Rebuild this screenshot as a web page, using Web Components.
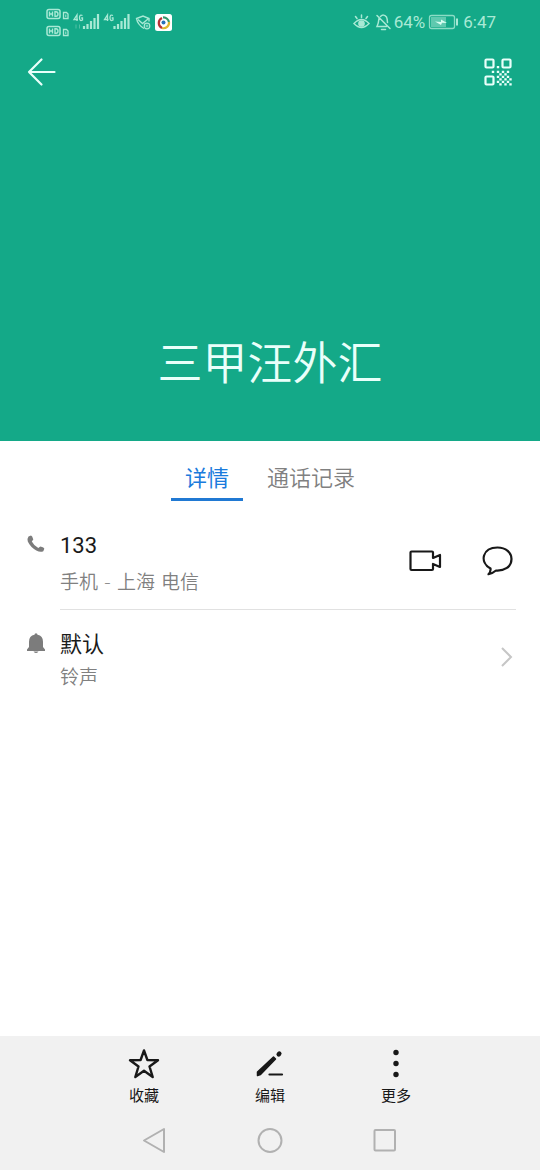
<!DOCTYPE html>
<html lang="zh-CN">
<head>
<meta charset="utf-8">
<meta name="viewport" content="width=device-width, initial-scale=1">
<title>联系人详情</title>
<style>
html, body { margin: 0; }
body { background: #fff; font-family: Roboto, "Noto Sans CJK SC", sans-serif; color: #1a1a1a; }
</style>
</head>
<body>
<contact-page></contact-page>
<script>
const define = (name, html) => customElements.define(name, class extends HTMLElement {
  constructor() {
    super();
    const t = document.createElement('template');
    t.innerHTML = html;
    this.attachShadow({ mode: 'open' }).append(t.content.cloneNode(true));
  }
});

define('status-bar', `
<style>
:host { display: flex; justify-content: space-between; align-items: center; box-sizing: border-box; height: 43px; padding: 0 44px 0 46px; color: #a9e9d5; font-size: 17px; line-height: 20px; }
div { display: flex; align-items: center; }
svg { display: block; flex: none; }
.right { gap: 3px; }
</style>
<div>
<svg width="128" height="32" viewBox="46 5 128 32" fill="none" stroke="currentColor" role="img" aria-label="信号">
  <rect x="47" y="8.500" width="13" height="9" rx="2" stroke-width="1.500"/>
  <path d="M49.500 10.500v5M52.500 10.500v5M49.500 13h3M55 10.700v4.600h1q2 0 2-2.300t-2-2.300z" stroke-width="1.400"/>
  <path d="M63.500 11.500h3l1.500 1.500v4.500h-4.500z" stroke-width="1.300"/>
  <path d="M65.800 13.500v2.500"/>
  <rect x="47" y="25.500" width="13" height="9" rx="2" stroke-width="1.500"/>
  <path d="M49.500 27.500v5M52.500 27.500v5M49.500 30h3M55 27.700v4.600h1q2 0 2-2.300t-2-2.300z" stroke-width="1.400"/>
  <path d="M63.500 28.500h3l1.500 1.500v4.500h-4.500z" stroke-width="1.300"/>
  <path d="M65.800 30.500v2.500"/>
  <g stroke-width="1.300">
    <path d="M77 20v-6l-3 4.500h4M82.500 14.500q-3-1.500-3 2.300t3 2.200v-2h-1.300"/>
    <path d="M107.500 20v-6l-3 4.500h4M113 14.500q-3-1.500-3 2.300t3 2.200v-2h-1.300"/>
  </g>
  <path d="M76 27.500v-4M79.500 23.500v4" opacity=".4"/>
  <g stroke-width="2.200">
    <path d="M84 28v-3M87.500 28v-5M91 28v-8M94.500 28v-11M98 28v-15"/>
    <path d="M114.500 28v-3M118 28v-5M121.500 28v-8M125 28v-11M128.500 28v-15"/>
  </g>
  <path d="M144 27.500q-6.500-4-7.500-10l6.500-2.500 6 2.500v3M138 18.500l4.500 4 5.500-4.500" stroke-width="1.400"/>
  <circle cx="147" cy="25" r="2.800" stroke-width="1.200"/>
  <path d="M145.500 25h3M147 23.500v3" stroke-width=".8"/>
  <rect x="155" y="13" width="17" height="17" rx="2.500" fill="#fff" stroke="none"/>
  <path d="M163 16.500a5.500 5.500 0 0 1 6 5" stroke="#32966a" stroke-width="2.200"/>
  <path d="M169 21a5.500 5.500 0 0 1-7 6" stroke="#e0b62e" stroke-width="2.200"/>
  <path d="M162 27a5.500 5.500 0 0 1 0-10" stroke="#b63336" stroke-width="2.200"/>
  <circle cx="163.500" cy="21.500" r="2" fill="#256fb8" stroke="none"/>
</svg>
</div>
<div class="right">
<svg width="38" height="20" viewBox="353 11 38 20" fill="none" stroke="currentColor" stroke-width="1.500" stroke-linecap="round" role="img" aria-label="护眼，静音">
  <path d="M354 22.500q7.500-8 15 0-7.500 8-15 0zM361.500 14v2.500M355.500 15.500l1.500 2M367.500 15.500l-1.500 2"/>
  <circle cx="361.500" cy="22.500" r="2.600" fill="currentColor"/>
  <path d="M377 14.500l13 13M379 17.500q-.5 5-2 8h9.500M380.500 15.500q3-3 6 .5 1 2 1 5.500M381.500 28.500h4"/>
</svg>
<span>64%</span>
<svg width="32" height="16" viewBox="429 13 32 16" fill="none" role="img" aria-label="正在充电">
  <rect x="430.500" y="14.500" width="25" height="13" rx="2" stroke="currentColor" stroke-width="1.300" opacity=".8"/>
  <rect x="432" y="16" width="15" height="10" fill="currentColor" opacity=".5"/>
  <path d="M457 17.500h2v7h-2z" fill="currentColor"/>
  <path d="M436 20.500l6 .5v-2.500l6 3.500-5-.3-1 2.300z" fill="#d9fff2"/>
</svg>
<span>6:47</span>
</div>`);

define('contact-hero', `
<style>
:host { display: block; background: #14a988; color: #e9fffa; }
nav { display: flex; justify-content: space-between; padding: 9px 22px; }
button { display: grid; place-items: center; width: 40px; height: 40px; padding: 0; border: 0; background: none; color: inherit; }
svg { display: block; }
h1 { margin: 0; padding: 231px 16px 43px; text-align: center; font-size: 45px; font-weight: 350; line-height: 66px; }
</style>
<status-bar></status-bar>
<nav>
<button aria-label="返回"><svg width="30" height="30" viewBox="0 0 30 30" fill="none" stroke="currentColor" stroke-width="2.200" stroke-linecap="round" stroke-linejoin="round"><path d="M14.500 2.500L2 15l12.500 12.500M2 15h25.500"/></svg></button>
<button aria-label="二维码"><svg width="28" height="28" viewBox="0 0 28 28" fill="none" stroke="currentColor" stroke-width="2.200"><rect x="1.500" y="1.500" width="8" height="8" rx="1"/><rect x="18.500" y="1.500" width="8" height="8" rx="1"/><rect x="1.500" y="18.500" width="8" height="8" rx="1"/><path d="M12.800 9.200h2.400M7.800 13.900h2.400M12.800 13.900h2.400M17.800 13.900h2.400M22.800 13.900h2.400M15.300 16.400h2.400M20.300 16.400h2.400M12.800 18.900h2.400M17.800 18.900h2.400M22.800 18.900h2.400M15.300 21.400h2.400M20.300 21.400h2.400M25.300 21.400h2.400M12.800 23.900h2.400M17.800 23.900h2.400M22.800 23.900h2.400M15.300 26.400h2.400M20.300 26.400h2.400M25.300 26.400h2.400"/></svg></button>
</nav>
<h1><slot></slot></h1>`);

define('contact-tabs', `
<style>
:host { display: flex; justify-content: center; gap: 10px; padding: 15px 0 20px; }
button { box-sizing: border-box; height: 45px; padding: 3px 14px 0; border: 0; border-bottom: 3px solid transparent; background: none; color: #808080; font: 350 22px/36px Roboto, "Noto Sans CJK SC", sans-serif; }
[aria-selected=true] { color: #1a7bdc; border-color: #2079d3; font-weight: 400; }
</style>
<button role="tab" aria-selected="true">详情</button>
<button role="tab" aria-selected="false">通话记录</button>`);

define('detail-row', `
<style>
:host { --top: 18px; --gap: 0px; display: grid; grid-template-columns: 36px 1fr; padding: 0 24px; }
:host([divided]) { --top: 8px; --gap: 4px; }
.icon { padding: calc(var(--top) + 5px) 0 0 2px; }
.body { display: flex; justify-content: space-between; align-items: center; padding: var(--top) 0 12px; }
:host([divided]) .body { border-bottom: 1px solid #e1e1e1; }
.text { display: flex; flex-direction: column; gap: var(--gap); }
.title { font-size: 22px; font-weight: 400; line-height: 34px; }
.sub { color: #808080; font-family: "DejaVu Sans", "Noto Sans CJK SC", sans-serif; font-size: 19px; font-weight: 350; line-height: 30px; }
.actions { padding-bottom: 4px; }
</style>
<div class="icon"><slot name="icon"></slot></div>
<div class="body">
<div class="text"><div class="title"><slot name="title"></slot></div><div class="sub"><slot name="sub"></slot></div></div>
<div class="actions"><slot name="actions"></slot></div>
</div>`);

define('action-bar', `
<style>
:host { display: grid; grid-template-columns: repeat(3, 1fr); padding: 10px 15% 0; }
button { display: flex; flex-direction: column; align-items: center; gap: 4px; padding: 0; border: 0; background: none; color: #181818; font: 400 15px/24px Roboto, "Noto Sans CJK SC", sans-serif; }
svg { display: block; }
</style>
<button><svg width="34" height="34" viewBox="0 0 34 34" fill="none" stroke="currentColor" stroke-width="2.400" stroke-linejoin="round"><path d="M17 4.500l3.400 9.500 10.600.2-8.500 6.300 3.200 10.500-8.700-6.200-8.700 6.200 3.200-10.500L3 14.200l10.600-.2z"/></svg>收藏</button>
<button><svg width="34" height="34" viewBox="0 0 34 34" fill="currentColor" stroke="currentColor" stroke-linejoin="round" stroke-linecap="round"><path d="M4.500 29.500v-3.500L20.500 11l2 2L7.500 28.500z" stroke-width="1.500"/><path d="M25.700 8.300l.6-.6" stroke-width="4.500"/><path d="M16.500 28.500h12.500" stroke-width="2.200"/></svg>编辑</button>
<button><svg width="34" height="34" viewBox="0 0 34 34" fill="currentColor"><circle cx="17" cy="6.500" r="2.700"/><circle cx="17" cy="17.500" r="2.700"/><circle cx="17" cy="28.500" r="2.700"/></svg>更多</button>`);

define('system-nav', `
<style>
:host { display: flex; justify-content: space-between; padding: 18px 26% 16px; color: #b1b1b1; }
button { display: block; padding: 0; border: 0; background: none; color: inherit; }
svg { display: block; }
</style>
<button aria-label="返回"><svg width="28" height="28" viewBox="0 0 28 28" fill="none" stroke="currentColor" stroke-width="2" stroke-linejoin="round"><path d="M24 3v23L4 14.500z"/></svg></button>
<button aria-label="主屏幕"><svg width="28" height="28" viewBox="0 0 28 28" fill="none" stroke="currentColor" stroke-width="2"><circle cx="14" cy="14.500" r="11.500"/></svg></button>
<button aria-label="最近任务"><svg width="28" height="28" viewBox="0 0 28 28" fill="none" stroke="currentColor" stroke-width="2"><rect x="2.500" y="4" width="20.500" height="20.500" rx="1"/></svg></button>`);

define('contact-page', `
<style>
:host { display: flex; flex-direction: column; min-height: 100vh; }
main { flex: 1; }
footer { background: #f1f1f1; }
svg { display: block; }
.acts { display: flex; gap: 36px; }
.acts button { display: grid; place-items: center; width: 36px; height: 40px; padding: 0; border: 0; background: none; color: #181818; }
</style>
<contact-hero>三甲汪外汇</contact-hero>
<main>
<contact-tabs></contact-tabs>
<detail-row divided>
  <svg slot="icon" width="20" height="20" viewBox="0 0 20 20" fill="#7c7c7c"><path d="M2.500 2.500L5 1.500q1.200.2 2.300 4l-1.500 2q2 4 6.500 6.500l2-1.500q4 1 4 2.300l-1 2.400q-3 1.500-7-.700-6-3.500-8.500-9Q1 4.500 2.500 2.500z"/></svg>
  <span slot="title">133</span>
  <span slot="sub">手机 - 上海 电信</span>
  <div slot="actions" class="acts">
    <button aria-label="视频通话"><svg width="34" height="34" viewBox="0 0 34 34" fill="none" stroke="currentColor" stroke-width="2.200" stroke-linejoin="round"><path d="M1.500 8.500q0-1 1-1h20.500q1 0 1 1v5.500l7-3v12l-7-3v5q0 1-1 1h-20.500q-1 0-1-1z"/></svg></button>
    <button aria-label="发信息"><svg width="34" height="34" viewBox="0 0 34 34" fill="none" stroke="currentColor" stroke-width="2.200" stroke-linejoin="round"><path d="M9.500 24.500C-2 18 1.500 3.500 16.500 3.500c8.500 0 14 5 14 11.500 0 8-7 12-15.500 11.500q-3.500 3-7.500 3.700 2.500-2.700 2-5.700z"/></svg></button>
  </div>
</detail-row>
<detail-row>
  <svg slot="icon" width="20" height="22" viewBox="0 0 20 22" fill="#7c7c7c"><path d="M8.500 1.800a1.500 1.500 0 0 1 3 0q5.500 1 5.500 7v5.200l2 2.500v1.500h-18v-1.500l2-2.500V8.800q0-6 5.500-7zM7.500 18.500h5q-2.500 3-5 0z"/></svg>
  <span slot="title">默认</span>
  <span slot="sub">铃声</span>
  <svg slot="actions" width="20" height="22" viewBox="0 0 20 22" fill="none" stroke="#c6c6c6" stroke-width="2"><path d="M6 1l9 9-9 9"/></svg>
</detail-row>
</main>
<footer>
<action-bar></action-bar>
<system-nav></system-nav>
</footer>`);
</script>
</body>
</html>
